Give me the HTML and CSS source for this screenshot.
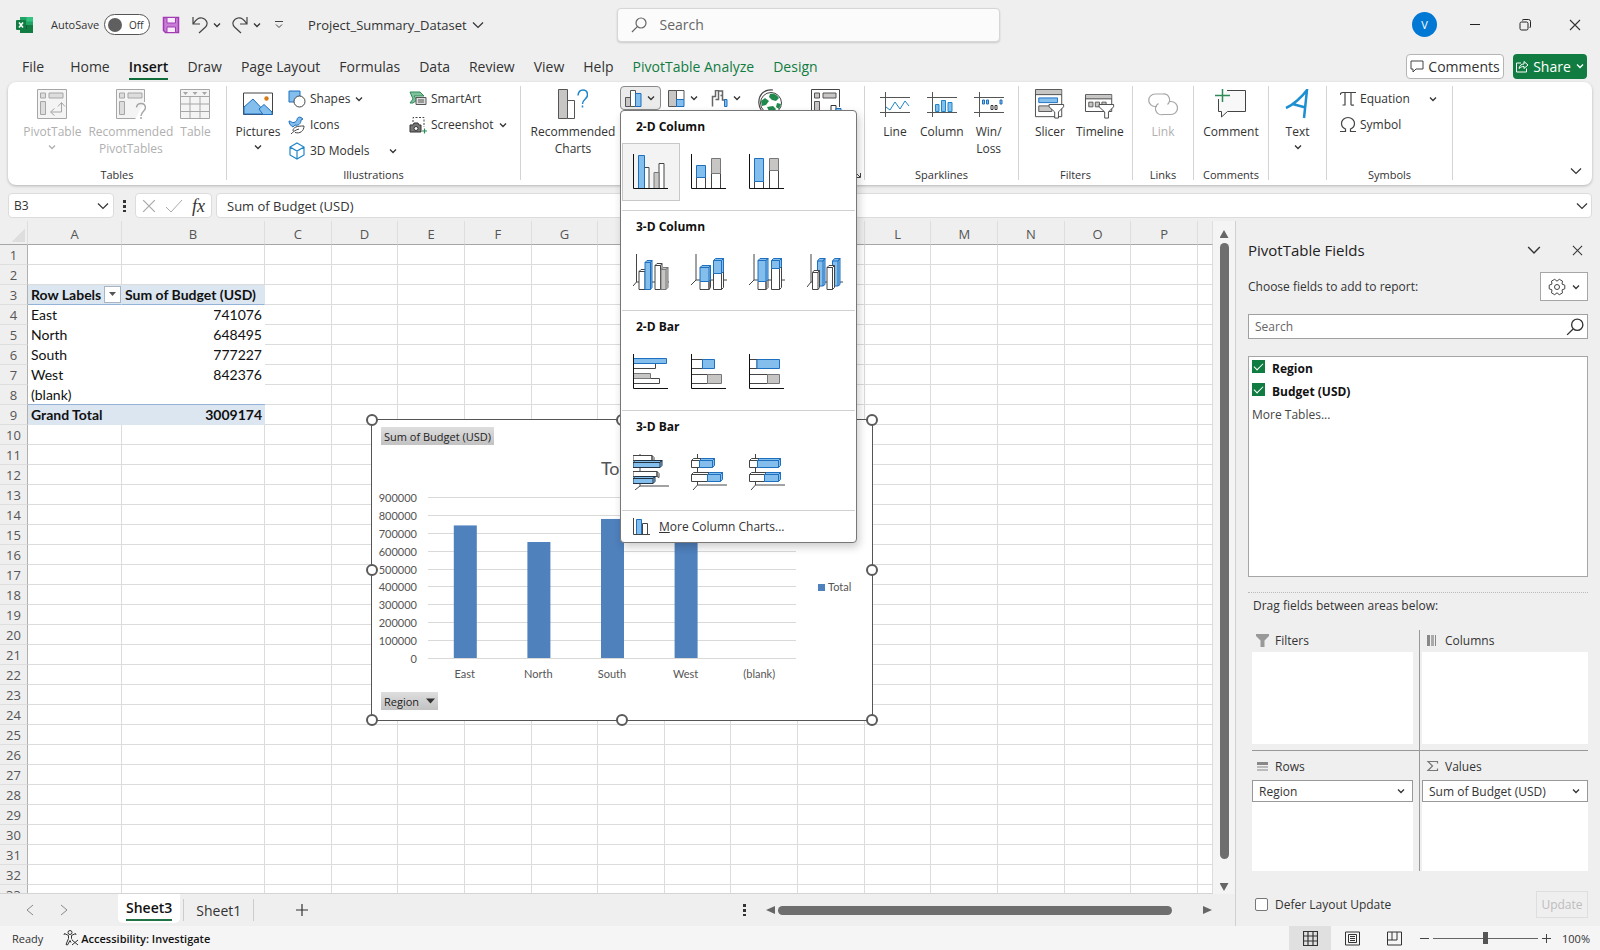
FILE: index.html
```html
<!DOCTYPE html>
<html lang="en">
<head>
    <meta charset="UTF-8">
    <meta name="viewport" content="width=device-width, initial-scale=1.0">
    <title>Project_Summary_Dataset - Excel</title>
    <link rel="stylesheet" href="styles.css">
</head>
<body>
    <!-- Shared icons -->
    <svg class="sprite" aria-hidden="true">
        <symbol id="chev" viewBox="0 0 10 10"><path d="M2 3.5l3 3 3-3" fill="none" stroke="currentColor" stroke-width="1.3"/></symbol>
        <symbol id="chev-lg" viewBox="0 0 12 12"><path d="M1 3.5l5 5 5-5" fill="none" stroke="currentColor" stroke-width="1.2"/></symbol>
        <symbol id="cross" viewBox="0 0 12 12"><path d="M1 1l10 10M11 1L1 11" fill="none" stroke="currentColor" stroke-width="1.1"/></symbol>
        <symbol id="lens" viewBox="0 0 16 16"><circle cx="10" cy="6" r="5" fill="none" stroke="currentColor" stroke-width="1.2"/><path d="M6.3 9.7L1 15" stroke="currentColor" stroke-width="1.2"/></symbol>
    </svg>

    <header class="titlebar">
        <div class="title-left">
            <svg class="logo" viewBox="0 0 18 18"><path d="M4 1h13v16H4z" fill="#21a366"/><path d="M10.5 1H17v4.500h-6.500z" fill="#33c481"/><path d="M4 9h13v8H4z" fill="#107c41"/><path d="M4 9h7v4H4z" fill="#185c37"/><rect y="4" width="10" height="10" rx="1" fill="#107c41"/><path d="M3 6.5l4 5M7 6.5l-4 5" stroke="#fff" stroke-width="1.5"/></svg>
            <label class="autosave">AutoSave <input type="checkbox"><span class="toggle">Off</span></label>
            <button class="plain save" aria-label="Save"><svg width="18" height="18" viewBox="0 0 18 18"><path d="M1.5 1.5h15v15h-13l-2-2z" fill="#c77dd6" stroke="#a33ab5" stroke-width="1.5"/><path d="M5 1.5h8.500v5.500H5z" fill="#f7eaf9" stroke="#a33ab5"/><path d="M5 11h8.500v5.500H5z" fill="#f7eaf9" stroke="#a33ab5"/></svg></button>
            <button class="plain" aria-label="Undo"><svg width="16" height="18" viewBox="0 0 16 18"><path d="M1 1v7h7M1.5 7.5C4 3.5 7 1.5 10 2c5 1 6.500 6 3.500 9L7 17" fill="none" stroke="#444" stroke-width="1.2"/></svg></button>
            <svg class="chev"><use href="#chev"/></svg>
            <button class="plain redo" aria-label="Redo"><svg width="16" height="18" viewBox="0 0 16 18"><path d="M15 1v7H8M14.5 7.5C12 3.5 9 1.5 6 2 1 3-.5 8 2.5 11L9 17" fill="none" stroke="#444" stroke-width="1.2"/></svg></button>
            <svg class="chev"><use href="#chev"/></svg>
            <button class="plain qat" aria-label="Customize toolbar"><svg width="10" height="10" viewBox="0 0 10 10"><path d="M1 1.5h8M2 4.5l3 3 3-3" fill="none" stroke="#444"/></svg></button>
            <button class="plain docname">Project_Summary_Dataset <svg class="chev-lg"><use href="#chev-lg"/></svg></button>
        </div>
        <div class="topsearch">
            <svg class="lens"><use href="#lens"/></svg>
            <input type="text" placeholder="Search" aria-label="Search">
        </div>
        <div class="title-right">
            <button class="avatar">V</button>
            <button class="plain win" aria-label="Minimize"><svg width="10" height="12" viewBox="0 0 10 12"><path d="M0 5.5h10" stroke="#222"/></svg></button>
            <button class="plain win" aria-label="Restore"><svg width="12" height="12" viewBox="0 0 12 12" fill="none" stroke="#222"><rect x="1" y="3" width="8" height="8" rx="1.5"/><path d="M3 1.5C3.5 1 4 .5 5 .5h4.500q2 0 2 2V7q0 1.500-1 2"/></svg></button>
            <button class="plain win" aria-label="Close"><svg width="12" height="12"><use href="#cross"/></svg></button>
        </div>
    </header>

    <nav class="tabs">
        <a href="#" class="file">File</a>
        <a href="#">Home</a>
        <a href="#" class="active">Insert</a>
        <a href="#">Draw</a>
        <a href="#">Page Layout</a>
        <a href="#">Formulas</a>
        <a href="#">Data</a>
        <a href="#">Review</a>
        <a href="#">View</a>
        <a href="#">Help</a>
        <a href="#" class="context">PivotTable Analyze</a>
        <a href="#" class="context">Design</a>
        <button class="comments"><svg width="14" height="14" viewBox="0 0 14 14"><path d="M1 2h12v8H6l-3 3v-3H1z" fill="none" stroke="#444"/></svg>Comments</button>
        <button class="share"><svg width="14" height="14" viewBox="0 0 14 14"><path d="M6 4H1.500v9h10V9.500M4 9.500C4.500 6.500 6.500 5 9 5V2.500L13 6 9 9.500V7.500C7 7.500 5.500 8 4 9.500z" fill="none" stroke="#fff"/></svg>Share<svg class="chev"><use href="#chev"/></svg></button>
    </nav>

    <section class="ribbon">
        <div class="group g-tables">
            <div class="group-body">
                <button class="big" disabled><svg width="30" height="30" viewBox="0 0 30 30" fill="#ddd" stroke="#a6a6a6"><path d="M.5.5h29v29H.5z" fill="#f4f4f4"/><path d="M3.5 4h5v5h-5zM12 4h14v5H12zM3.5 12.5h5v13h-5z"/><path d="M24.5 14v9H14M21 17.5l3.500-4 3.500 4M17.5 19.5l-4 3.500 4 3.500" fill="none"/></svg><span>PivotTable</span><svg class="chev"><use href="#chev"/></svg></button>
                <button class="big" disabled><svg width="30" height="30" viewBox="0 0 30 30" fill="#ddd" stroke="#a6a6a6"><path d="M19.5 29.5H.5V.5h28V13" fill="#f4f4f4"/><path d="M3.5 4h5v5h-5zM12 4h14v5H12zM3.5 12.5h5v13h-5z"/><path d="M20.5 18.5q.5-4 4.500-4t4.500 4c0 3.500-4.500 4-4.500 8.500m0 1v2" fill="none" stroke-width="1.5"/></svg><span>Recommended<br>PivotTables</span></button>
                <button class="big" disabled><svg width="30" height="30" viewBox="0 0 30 30" fill="none" stroke="#a6a6a6"><path d="M.5.5h29v29H.5z" fill="#f4f4f4"/><path d="M.5 7.5h29M.5 15h29M.5 22.5h29M10 7.5v22M20 7.5v22"/><path d="M3 3h5L5.500 6zM12.5 3h5L15 6zM22 3h5l-2.500 3z" fill="#a6a6a6" stroke="none"/></svg><span>Table</span></button>
            </div>
            <div class="group-name">Tables</div>
        </div>
        <div class="group g-illus">
            <div class="group-body">
                <button class="big"><svg width="30" height="30" viewBox="0 0 30 30"><path d="M.5 4h29v21.500H.5z" fill="#fff" stroke="#444"/><path d="M1 18l9-8 14 15H1z" fill="#83beec" stroke="#1e6fbe"/><path d="M16 20l5-4.500 8 7.500v2.500h-9z" fill="#83beec" stroke="#1e6fbe"/><circle cx="23.5" cy="9.5" r="2.2" fill="#d87a16"/></svg><span>Pictures</span><svg class="chev"><use href="#chev"/></svg></button>
                <div class="stack">
                    <button class="small"><svg width="18" height="18" viewBox="0 0 18 18"><path d="M1 1h11v11H1z" fill="#83beec" stroke="#1e6fbe"/><circle cx="11.5" cy="11.5" r="5.5" fill="#fff" stroke="#444"/></svg>Shapes<svg class="chev"><use href="#chev"/></svg></button>
                    <button class="small"><svg width="18" height="18" viewBox="0 0 18 18"><path d="M9 4C9 1.500 11 .5 13 1.500L15 3l-2 1c0 4-3 6-6 5L5 11C3 10 1 8 1 5c2 0 3 2 5 1.500S8 5 9 4z" fill="#83beec" stroke="#1e6fbe"/><path d="M5 15c0-4 4-5 11-5 0 5-4 8-9 6.500M3 18c2-2 4-4 8-5" fill="#fff" stroke="#444"/></svg>Icons</button>
                    <button class="small"><svg width="18" height="18" viewBox="0 0 18 18" fill="none" stroke="#1e86c8" stroke-width="1.2"><path d="M9 1l7 4v8l-7 4-7-4V5zM2 5l7 4 7-4M9 9v8"/></svg>3D Models<svg class="chev far"><use href="#chev"/></svg></button>
                </div>
                <div class="stack">
                    <button class="small"><svg width="18" height="18" viewBox="0 0 18 18"><path d="M1 2h10l4 4H5l3 4-4 3H1l3-4z" fill="#7fc29b" stroke="#2e8a57"/><path d="M7 7.5h10v7H7z" fill="#ddd" stroke="#555"/><path d="M9 10h6M9 12h6" stroke="#555"/></svg>SmartArt</button>
                    <button class="small"><svg width="18" height="18" viewBox="0 0 18 18"><path d="M4 6V1.500h11V11" fill="none" stroke="#444" stroke-dasharray="2 1.5"/><path d="M1 9h3l1-2h4l1 2h2v7H1z" fill="#777" stroke="#333"/><circle cx="7" cy="12.5" r="2" fill="#fff" stroke="#333"/><path d="M15.5 12.5v5M13 15h5" stroke="#2e8a57" stroke-width="1.2"/></svg>Screenshot<svg class="chev"><use href="#chev"/></svg></button>
                </div>
            </div>
            <div class="group-name">Illustrations</div>
        </div>
        <div class="group g-charts">
            <div class="group-body">
                <button class="big"><svg width="30" height="30" viewBox="0 0 30 30"><path d="M.5.5h9v29h-9z" fill="#c8c6c4" stroke="#555"/><path d="M9.5 11.5h7v18h-7z" fill="#fff" stroke="#555"/><path d="M20 6.5Q20.5 1 25 1t4.500 5c0 4-5 4-5 9m0 1.500v2" fill="none" stroke="#1e86c8" stroke-width="1.5"/></svg><span>Recommended<br>Charts</span></button>
                <button class="mini pressed" aria-label="Column chart"><svg width="17" height="17" viewBox="0 0 17 17"><path d="M.5 7.5h5v9h-5z" fill="#c8c6c4" stroke="#555"/><path d="M5.5.5h5v16h-5z" fill="#fff" stroke="#555"/><path d="M10.5 3.5h5.500v13h-5.500z" fill="#83beec" stroke="#1e6fbe"/></svg><svg class="chev"><use href="#chev"/></svg></button>
                <button class="mini" aria-label="Hierarchy chart"><svg width="17" height="17" viewBox="0 0 17 17"><path d="M.5.5h8v16h-8z" fill="#c8c6c4" stroke="#555"/><path d="M8.5.5h7.500v9H8.500z" fill="#fff" stroke="#555"/><path d="M8.5 9.5h7.500v7H8.500z" fill="#83beec" stroke="#1e6fbe"/></svg><svg class="chev"><use href="#chev"/></svg></button>
                <button class="mini" aria-label="Waterfall chart"><svg width="17" height="17" viewBox="0 0 17 17"><path d="M1.5 16.5V6.500h3V.5h3v9h-3M7.5 1h4v9h3M11.5 9.5v-4H9.500" fill="none" stroke="#666" stroke-width="1.5"/><path d="M13.5 9.5h2.500v7h-2.500z" fill="#83beec" stroke="#1e6fbe"/></svg><svg class="chev"><use href="#chev"/></svg></button>
                <button class="mini tall" aria-label="Maps"><svg width="26" height="30" viewBox="0 0 26 30"><path d="M16 1C6 0 1 7 2 15s8 12 13 12" fill="none" stroke="#444" stroke-width="1.2"/><circle cx="14" cy="14" r="10.5" fill="#fff" stroke="#444"/><path d="M13 5c3-1 7 0 9 4l-3 3-4-1-3-3zM4 12l4-3 4 3-3 4-4 1zM10 18l6-1 3 3-3 4h-3zM20 14l4 1-2 5-3-2z" fill="#1f8a4c"/></svg></button>
                <button class="mini tall pc" aria-label="PivotChart"><svg width="32" height="30" viewBox="0 0 32 30"><path d="M.5 29V.5h28V18" fill="#fff" stroke="#444"/><path d="M3.5 4h5v5h-5zM12 4h13v5H12zM3.5 12.5h5v13h-5z" fill="#c8c6c4" stroke="#555"/><path d="M20 16.5h5V29h-5z" fill="#fff" stroke="#333"/><path d="M25 19.5h5V29h-5z" fill="#83beec" stroke="#1e6fbe"/></svg></button>
            </div>
            <div class="group-name launcher"><svg width="8" height="8" viewBox="0 0 8 8" fill="none" stroke="#444"><path d="M0 .5h3M.5 0v3M2 2l5 5M7.5 3v4.500H3"/></svg></div>
        </div>
        <div class="group g-spark">
            <div class="group-body">
                <button class="big"><svg width="30" height="30" viewBox="0 0 30 30" fill="none" stroke="#555"><path d="M0 8.5h30M0 23.5h30M5.5 3v25"/><path d="M6 18l4 3 5-8 5 7 5-8 4 5" stroke="#1e86c8"/></svg><span>Line</span></button>
                <button class="big"><svg width="30" height="30" viewBox="0 0 30 30" fill="none" stroke="#555"><path d="M0 8.5h30M0 23.5h30M5.5 3v25"/><path d="M8.5 15.5h3.500v7H8.500zM14.5 11.5h4v11h-4zM21 13.5h4v9h-4z" fill="#83beec" stroke="#1e86c8"/></svg><span>Column</span></button>
                <button class="big"><svg width="30" height="30" viewBox="0 0 30 30" fill="none" stroke="#555"><path d="M0 8.5h30M0 23.5h30M5.5 3v25"/><path d="M8.5 11h2v4h-2zM12.5 11h2v4h-2zM26 11h2v4h-2z" fill="#83beec" stroke="#1e6fbe"/><path d="M17 16.5h2v4h-2zM21 16.5h2v4h-2z" fill="#fff" stroke="#333"/></svg><span>Win/<br>Loss</span></button>
            </div>
            <div class="group-name">Sparklines</div>
        </div>
        <div class="group g-filters">
            <div class="group-body">
                <button class="big"><svg width="32" height="32" viewBox="0 0 32 32"><path d="M.5.5h28v29H.5z" fill="#fff" stroke="#444"/><path d="M1 1h27v5H1z" fill="#c8c6c4"/><path d="M.5 6h28" stroke="#444"/><path d="M4 9.5h20v5H4z" fill="#83beec" stroke="#1e6fbe"/><path d="M4 18h14v6H4z" fill="#c8c6c4" stroke="#555"/><path d="M15 16.5h15.500v2.500L25 24.500V31h-4v-6.500L15 19z" fill="#fff" stroke="#444"/></svg><span>Slicer</span></button>
                <button class="big"><svg width="32" height="32" viewBox="0 0 32 32"><path d="M.5 6h28v18H.5z" fill="#fff" stroke="#444"/><path d="M1 6.5h27v4H1z" fill="#c8c6c4"/><path d="M.5 10.5h28" stroke="#444"/><path d="M4 14h4.500v5H4zM11 14h4.500v5H11zM18 14h4.500v5H18z" fill="#c8c6c4" stroke="#555"/><path d="M15 16.5h15.500v2.500L25 24.500V31h-4v-6.500L15 19z" fill="#fff" stroke="#444"/></svg><span>Timeline</span></button>
            </div>
            <div class="group-name">Filters</div>
        </div>
        <div class="group g-links">
            <div class="group-body">
                <button class="big" disabled><svg width="30" height="30" viewBox="0 0 30 30" fill="none" stroke="#a6a6a6" stroke-width="1.2"><path d="M9 17.5H7a6 6 0 0 1 0-12.500h8a6 6 0 0 1 4.500 10.500"/><path d="M21 12.5h2a6 6 0 0 1 0 13h-8a6 6 0 0 1-4.500-11"/></svg><span>Link</span></button>
            </div>
            <div class="group-name">Links</div>
        </div>
        <div class="group g-comments">
            <div class="group-body">
                <button class="big"><svg width="32" height="30" viewBox="0 0 32 30"><path d="M3.5 10v12.500h3V28l6-5.500h18v-21H12" fill="#f8f8f8" stroke="#444"/><path d="M7.5-1v14M0 6.5h15" stroke="#2e8a57" stroke-width="1.5"/></svg><span>Comment</span></button>
            </div>
            <div class="group-name">Comments</div>
        </div>
        <div class="group g-text">
            <div class="group-body">
                <button class="big"><svg width="26" height="30" viewBox="0 0 26 30"><path d="M1 19C8 16 17 8 22 1l-3 28M7.5 15l13 3.500" fill="none" stroke="#1e8fd0" stroke-width="2.5"/></svg><span>Text</span><svg class="chev"><use href="#chev"/></svg></button>
            </div>
        </div>
        <div class="group g-symbols">
            <div class="group-body">
                <div class="stack">
                    <button class="small"><svg width="16" height="18" viewBox="0 0 16 18" fill="none" stroke="#444" stroke-width="1.2"><path d="M0 5Q.5 2.5 3 2.5h13M5 2.5V15H2.500M11 2.5v12q0 1 3 .5"/></svg>Equation<svg class="chev far"><use href="#chev"/></svg></button>
                    <button class="small"><svg width="16" height="18" viewBox="0 0 16 18" fill="none" stroke="#444" stroke-width="1.2"><path d="M0 15.5h5.500V13C3 12 1.500 10 1.500 7.500a6.500 6 0 0 1 13 0C14.500 10 13 12 10.500 13v2.500H16"/></svg>Symbol</button>
                </div>
            </div>
            <div class="group-name">Symbols</div>
        </div>
        <button class="plain collapse" aria-label="Collapse ribbon"><svg class="chev-lg"><use href="#chev-lg"/></svg></button>
    </section>

    <div class="formulabar">
        <div class="namebox"><input type="text" value="B3" aria-label="Name box"><svg class="chev-lg"><use href="#chev-lg"/></svg></div>
        <span class="dots"></span>
        <div class="fxbox">
            <svg width="14" height="14" class="faint"><use href="#cross"/></svg>
            <svg width="18" height="14" viewBox="0 0 18 14" class="faint"><path d="M1 8l5 5L17 1" fill="none" stroke="currentColor"/></svg>
            <button class="plain fx">fx</button>
        </div>
        <div class="formula"><input type="text" value="Sum of Budget (USD)" aria-label="Formula"><svg class="chev-lg"><use href="#chev-lg"/></svg></div>
    </div>

    <main class="work">
        <section class="sheet">
            <div class="sheet-view">
                <div class="grid-clip">
                    <table class="grid">
                        <colgroup><col class="c-num"><col class="c-a"><col class="c-b"><col span="14"><col class="c-last"></colgroup>
                        <thead><tr id="letters"></tr></thead>
                        <tbody id="rows"></tbody>
                    </table>

                    <div class="chart">
                        <svg viewBox="0 0 501 301" width="501" height="301">
                            <g id="plot"></g>
                            <text x="249" y="56" class="chart-title">Total</text>
                            <rect x="447" y="165" width="7" height="7" fill="#4f81bd"/>
                            <text x="457" y="172">Total</text>
                        </svg>
                        <button class="field value-field">Sum of Budget (USD)</button>
                        <button class="field axis-field">Region <svg width="9" height="6" viewBox="0 0 9 6"><path d="M0 .5h9L4.500 5.500z" fill="#333"/></svg></button>
                        <i class="handle n w"></i><i class="handle n c"></i><i class="handle n e"></i>
                        <i class="handle m w"></i><i class="handle m e"></i>
                        <i class="handle s w"></i><i class="handle s c"></i><i class="handle s e"></i>
                    </div>
                </div>
                <div class="vscroll"><i class="arrow up"></i><i class="thumb"></i><i class="arrow down"></i></div>
            </div>
            <div class="sheetbar">
                <button class="plain nav" aria-label="Previous sheet"><svg width="8" height="12" viewBox="0 0 8 12"><path d="M7 1L1 6l6 5" fill="none" stroke="currentColor"/></svg></button>
                <button class="plain nav" aria-label="Next sheet"><svg width="8" height="12" viewBox="0 0 8 12"><path d="M1 1l6 5-6 5" fill="none" stroke="currentColor"/></svg></button>
                <button class="tab current"><span>Sheet3</span></button>
                <button class="tab">Sheet1</button>
                <button class="plain add" aria-label="New sheet"><svg width="12" height="12" viewBox="0 0 12 12"><path d="M6 0v12M0 6h12" stroke="#333" stroke-width="1.2"/></svg></button>
                <span class="dots"></span>
                <div class="hscroll"><i class="arrow left"></i><i class="thumb"></i><i class="arrow right"></i></div>
            </div>
        </section>

        <aside class="pane">
            <div class="pane-head">
                <h2>PivotTable Fields</h2>
                <button class="plain" aria-label="Pane options"><svg width="14" height="14"><use href="#chev-lg"/></svg></button>
                <button class="plain" aria-label="Close pane"><svg width="11" height="11"><use href="#cross"/></svg></button>
            </div>
            <div class="pane-tools">
                <span>Choose fields to add to report:</span>
                <button class="gear" aria-label="Tools"><svg width="18" height="18" viewBox="0 0 18 18" fill="none" stroke="#444" stroke-linejoin="round"><path d="M16.8 7.2v3.6L14 11.9l.5 3-3.2 1.8L9 14.8l-2.3 1.9-3.2-1.8.5-3-2.8-1.1V7.2L4 6.1l-.5-3 3.2-1.8L9 3.200l2.3-1.9 3.2 1.8-.5 3z"/><circle cx="9" cy="9" r="2.5"/></svg><svg class="chev"><use href="#chev"/></svg></button>
            </div>
            <div class="field-search"><input type="text" placeholder="Search" aria-label="Search fields"><svg width="18" height="18"><use href="#lens"/></svg></div>
            <div class="field-list">
                <label class="check"><input type="checkbox" checked>Region</label>
                <label class="check"><input type="checkbox" checked>Budget (USD)</label>
                <a href="#">More Tables...</a>
            </div>
            <p class="drag">Drag fields between areas below:</p>
            <div class="areas">
                <div class="area">
                    <h3><svg width="13" height="13" viewBox="0 0 13 13"><path d="M0 0h13v2L8.500 6.500V13h-4V6.500L0 2z" fill="#999"/></svg>Filters</h3>
                    <div class="box"></div>
                </div>
                <div class="area">
                    <h3><svg width="13" height="13" viewBox="0 0 13 13"><path d="M1 1h3v11H1z" fill="#888"/><path d="M5 1h3v11H5z" fill="#aaa"/><path d="M9 1h1v11H9z" fill="#888"/></svg>Columns</h3>
                    <div class="box"></div>
                </div>
                <div class="area">
                    <h3><svg width="13" height="13" viewBox="0 0 13 13"><path d="M1 2h11v3H1z" fill="#888"/><path d="M1 6h11v2H1zM1 9h11v2H1z" fill="#bbb"/></svg>Rows</h3>
                    <div class="box"><div class="pick"><select aria-label="Rows field"><option>Region</option></select><svg class="chev"><use href="#chev"/></svg></div></div>
                </div>
                <div class="area">
                    <h3><svg width="13" height="13" viewBox="0 0 13 13"><path d="M11.5 3.5V1.500H2l4.500 4.500L2 10.500h9.500v-2" fill="none" stroke="#777" stroke-width="1.2"/></svg>Values</h3>
                    <div class="box"><div class="pick"><select aria-label="Values field"><option>Sum of Budget (USD)</option></select><svg class="chev"><use href="#chev"/></svg></div></div>
                </div>
            </div>
            <div class="pane-foot">
                <label class="defer"><input type="checkbox">Defer Layout Update</label>
                <button class="update" disabled>Update</button>
            </div>
        </aside>
    </main>

    <footer class="status">
        <span class="ready">Ready</span>
        <button class="plain access"><svg width="16" height="16" viewBox="0 0 16 16" fill="none" stroke="#333"><circle cx="7" cy="2.5" r="2"/><path d="M1.5 3.5l4 2v3l-2.500 6 1.500.5L7 10.500l1 2M12.5 3.5l-4 2v3l.5 1M1.5 3.5L1 5M12.5 3.5L13 5M9 10l6 5M15 10l-6 5"/></svg>Accessibility: Investigate</button>
        <div class="views">
            <button class="plain view on" aria-label="Normal"><svg width="15" height="15" viewBox="0 0 15 15" fill="none" stroke="#333"><path d="M.5.5h14v14H.5zM5 0v15M10 0v15M0 5h15M0 10h15" stroke-width="1.2"/></svg></button>
            <button class="plain view" aria-label="Page layout"><svg width="15" height="15" viewBox="0 0 15 15" fill="none" stroke="#333"><path d="M.5 1h14v13H.5zM3.5 3.5h8v8h-8zM5 5.5h5M5 7.5h5M5 9.5h5"/></svg></button>
            <button class="plain view" aria-label="Page break preview"><svg width="15" height="15" viewBox="0 0 15 15" fill="none" stroke="#333"><path d="M.5 1h14v13H.5zM5 1v8h5V1M.5 9H5"/></svg></button>
            <button class="plain zoom-btn" aria-label="Zoom out"><svg width="9" height="9" viewBox="0 0 9 9"><path d="M0 4.5h9" stroke="#444"/></svg></button>
            <input type="range" min="10" max="190" value="100" aria-label="Zoom">
            <button class="plain zoom-btn" aria-label="Zoom in"><svg width="9" height="9" viewBox="0 0 9 9"><path d="M0 4.5h9M4.5 0v9" stroke="#444"/></svg></button>
            <span class="percent">100%</span>
        </div>
    </footer>

    <!-- Column chart menu -->
    <div class="menu">
        <h4>2-D Column</h4>
        <div class="choices">
            <button class="selected" aria-label="Clustered column"><svg viewBox="0 0 36 36"><path d="M11.5 13.5H16v21h-4.500zM26 9.5h5v25h-5z" class="w"/><path d="M21 18.5h5v16h-5z" class="g"/><path d="M5.5 1.5h6v33h-6z" class="b"/><path d="M.5 0v34.500H35" class="l"/></svg></button>
            <button aria-label="Stacked column"><svg viewBox="0 0 36 36"><path d="M5.5 23.5h9v11h-9zM20.5 19.5h9v15h-9z" class="w"/><path d="M20.5 4.5h9v15h-9z" class="g"/><path d="M5.5 11.5h9v12h-9z" class="b"/><path d="M.5 0v34.500H35" class="l"/></svg></button>
            <button aria-label="100% stacked column"><svg viewBox="0 0 36 36"><path d="M5.5 27.5h9v7h-9zM20.5 16.5h9v18h-9z" class="w"/><path d="M20.5 4.5h9v12h-9z" class="g"/><path d="M5.5 4.5h9v23h-9z" class="b"/><path d="M.5 0v34.500H35" class="l"/></svg></button>
        </div>
        <h4>3-D Column</h4>
        <div class="choices">
            <button aria-label="3-D clustered column"><svg viewBox="0 0 36 36"><path d="M3.5 0v28L0 32M3.5 28H36" class="t"/><path d="M6 17.5h6v18H6zM6 17.5l2-2h5l-1 2M22 11.5h5.500v24H22zM22 11.5l2-2h5l-1.500 2M29 9.5V16" class="w"/><path d="M28 15.5h5v20h-5zM28 15.5l2-2h5l-2 2M33 15.5l2-2v20l-2 2" class="g"/><path d="M12 8.5h5.500v27H12zM12 8.5l2-2h5l-1.500 2M17.5 8.5l1.500-2v27l-1.500 2" class="b"/></svg></button>
            <button aria-label="3-D stacked column"><svg viewBox="0 0 36 36"><path d="M5 0v26L0 31M5 26h31" class="t"/><path d="M9 27.5h9v8H9zM18 27.5v8l1.500-2v-8zM22.5 19.5h8v16h-8zM30.5 19.5v16l2-2v-16z" class="w"/><path d="M9 13.5h9v14H9zM9 13.5l2-2h8.500l-1.500 2M18 13.5l1.500-2v14l-1.500 2M22.5 6.5h8v13h-8zM22.5 6.5l2-2h8l-2 2M30.5 6.5l2-2v13l-2 2" class="b"/></svg></button>
            <button aria-label="3-D 100% stacked column"><svg viewBox="0 0 36 36"><path d="M5 0v26L0 31M5 26h31" class="t"/><path d="M9 27.5h8v8H9zM17 27.5v8l2-2v-8zM22.5 14.5h8v21h-8zM30.5 14.5v21l2-2v-21z" class="w"/><path d="M9 6.5h8v21H9zM9 6.5l2-2h8l-2 2M17 6.5l2-2v21l-2 2M22.5 6.5h8v8h-8zM22.5 6.5l2-2h8l-2 2M30.5 6.5l2-2v8l-2 2" class="b"/></svg></button>
            <button aria-label="3-D column"><svg viewBox="0 0 36 36"><path d="M4 0v28L0 33M4 28h32" class="t"/><path d="M10.5 7h5.500v25h-5.500zM10.5 7l2-2.500h5.500l-2 2.500M16 7l2-2.500v26L16 32M25.5 7H31v25h-5.500zM25.5 7l2-2.500H33L31 7M31 7l2-2.500v26L31 32" class="b"/><path d="M5.5 18.5H11v17H5.500zM5.5 18.5l1.500-2h5.500l-1.500 2M11 18.5l1.500-2v17l-1.500 2M20 13.5h5.500v22H20zM20 13.5l2-2h5.500l-2 2M25.5 13.5l2-2v22l-2 2" class="w"/></svg></button>
        </div>
        <h4>2-D Bar</h4>
        <div class="choices">
            <button aria-label="Clustered bar"><svg viewBox="0 0 36 36"><path d="M.5 9.5h22v5h-22zM.5 24.5h26v5h-26z" class="w"/><path d="M.5 19.5h17v5h-17z" class="g"/><path d="M.5 4.5h33v5h-33z" class="b"/><path d="M.5 0v34.500H35" class="l"/></svg></button>
            <button aria-label="Stacked bar"><svg viewBox="0 0 36 36"><path d="M.5 5.5h11v9H.5zM.5 20.5h16v9H.5z" class="w"/><path d="M16.5 20.5h14v9h-14z" class="g"/><path d="M11.5 5.5h12v9h-12z" class="b"/><path d="M.5 0v34.500H35" class="l"/></svg></button>
            <button aria-label="100% stacked bar"><svg viewBox="0 0 36 36"><path d="M.5 5.5H8v9H.5zM.5 20.5h18v9H.5z" class="w"/><path d="M18.5 20.5h12v9h-12z" class="g"/><path d="M8 5.5h22.500v9H8z" class="b"/><path d="M.5 0v34.500H35" class="l"/></svg></button>
        </div>
        <h4>3-D Bar</h4>
        <div class="choices">
            <button aria-label="3-D clustered bar"><svg viewBox="0 0 36 36"><path d="M7 0v32L2 36M7 32h29" class="t"/><path d="M0 1.5h19v5H0zM19 1.5l2 2v5h-2zM0 17.5h24v5H0zM24 17.5l2 2v4l-2-1z" class="w"/><path d="M0 8.5h27v5H0zM0 8.5l2-2h27l-2 2M27 8.5l2-2v5l-2 2M0 24.5h20v5H0zM0 24.5l2-2h20l-2 2M20 24.5l2-2v5l-2 2" class="b dark"/></svg></button>
            <button aria-label="3-D stacked bar"><svg viewBox="0 0 36 36"><path d="M6.5 0v31L2 36M6.5 31H36" class="t"/><path d="M.5 6.5h8v7h-8zM.5 6.5l2-2h8l-2 2M.5 20.5h16v7H.5zM.5 20.5l2-2h16l-2 2" class="w"/><path d="M8.5 6.5h13v7h-13zM8.5 6.5l2-2h13l-2 2M21.5 6.5l2-2v7l-2 2M16.5 20.5h13v7h-13zM16.5 20.5l2-2h13l-2 2M29.5 20.5l2-2v7l-2 2" class="b"/></svg></button>
            <button aria-label="3-D 100% stacked bar"><svg viewBox="0 0 36 36"><path d="M6.5 0v31L2 36M6.5 31H36" class="t"/><path d="M.5 6.5h8v7h-8zM.5 6.5l2-2h8l-2 2M.5 20.5h15v7H.5zM.5 20.5l2-2h15l-2 2" class="w"/><path d="M8.5 6.5h21v7h-21zM8.5 6.5l2-2h21l-2 2M29.5 6.5l2-2v7l-2 2M15.5 20.5h14v7h-14zM15.5 20.5l2-2h14l-2 2M29.5 20.5l2-2v7l-2 2" class="b"/></svg></button>
        </div>
        <button class="more"><svg width="17" height="17" viewBox="0 0 17 17"><path d="M9.5 5.5h5v11h-5z" class="w"/><path d="M3.5 1.5h5v15h-5z" class="b"/><path d="M.5 0v16.500H17" class="t"/></svg><span><u>M</u>ore Column Charts...</span></button>
    </div>

    <script>
        const cells = {
            3: ['Row Labels', 'Sum of Budget (USD)'],
            4: ['East', 741076],
            5: ['North', 648495],
            6: ['South', 777227],
            7: ['West', 842376],
            8: ['(blank)', ''],
            9: ['Grand Total', 3009174]
        };

        const letters = 'ABCDEFGHIJKLMNOP';
        document.getElementById('letters').innerHTML = '<th class="corner"></th>' +
            [...letters].map(l => `<th>${l}</th>`).join('') + '<th></th>';

        let html = '';
        for (let r = 1; r <= 33; r++) {
            const row = cells[r] || ['', ''];
            const filter = r === 3 ? '<button class="filter" aria-label="Filter"><svg width="7" height="4" viewBox="0 0 7 4"><path d="M0 0h7L3.500 4z" fill="#555"/></svg></button>' : '';
            const type = r === 3 ? 'pt head' : r === 9 ? 'pt total' : cells[r] ? 'pt' : '';
            html += `<tr class="${type}"><th>${r}</th><td>${row[0]}${filter}</td><td>${row[1]}</td>${'<td></td>'.repeat(15)}</tr>`;
        }
        document.getElementById('rows').innerHTML = html;

        // Chart: value axis runs 0 to 900000, 161px tall
        const base = 239, left = 57, right = 425, scale = 161 / 900000;
        let plot = '';
        for (let v = 0; v <= 900000; v += 100000) {
            const y = Math.round(base - v * scale) + 0.5;
            plot += `<path d="M${left} ${y}H${right}" stroke="#d9d9d9"/><text x="46" y="${y + 4}" text-anchor="end">${v}</text>`;
        }
        for (let i = 0; i < 5; i++) {
            const [name, value] = cells[i + 4];
            const x = left + (right - left) / 5 * (i + 0.5);
            const h = value * scale;
            plot += `<rect x="${x - 11}" y="${base - h}" width="23" height="${h}" fill="#4f81bd"/><text x="${x}" y="259" text-anchor="middle">${name}</text>`;
        }
        document.getElementById('plot').innerHTML = plot;
    </script>
</body>
</html>
```
FILE: styles.css
```css
* {
    box-sizing: border-box;
}

body {
    margin: 0;
    height: 100vh;
    display: flex;
    flex-direction: column;
    background-color: #efefef;
    color: #333;
    font-family: "Open Sans", "Noto Sans", sans-serif;
    font-size: 13px;
    overflow: hidden;
}

button, input, select {
    font: inherit;
    color: inherit;
}

button {
    padding: 0;
    border: none;
    background: none;
}

svg {
    flex: none;
}

.sprite {
    display: none;
}

.plain {
    display: flex;
    align-items: center;
}

.chev {
    width: 10px;
    height: 10px;
}

.chev-lg {
    width: 12px;
    height: 12px;
}

/* Title bar */
.titlebar {
    display: flex;
    align-items: center;
    height: 49px;
    padding-left: 16px;
}

.title-left, .title-right {
    flex: 1;
    display: flex;
    align-items: center;
}

.logo {
    width: 18px;
    height: 18px;
}

.autosave {
    display: flex;
    align-items: center;
    gap: 5px;
    margin-left: 17px;
    font-size: 11px;
}

.autosave input {
    position: absolute;
    opacity: 0;
}

.toggle {
    display: flex;
    align-items: center;
    gap: 7px;
    width: 46px;
    height: 21px;
    padding-left: 3px;
    border: 1px solid #555;
    border-radius: 11px;
    background-color: #fff;
    font-size: 10px;
}

.toggle::before {
    content: "";
    width: 14px;
    height: 14px;
    border-radius: 50%;
    background-color: #5f5f5f;
}

.save {
    margin: 0 12px;
}

.title-left .chev {
    margin-left: 4px;
}

.redo {
    margin-left: 10px;
}

.qat {
    margin-left: 12px;
}

.docname {
    margin-left: 24px;
    gap: 5px;
}

.topsearch {
    display: flex;
    align-items: center;
    width: 383px;
    height: 34px;
    padding-left: 13px;
    border: 1px solid #d6d6d6;
    border-radius: 4px;
    background-color: #fbfbfb;
    box-shadow: 0 1px 2px rgba(0, 0, 0, 0.15);
}

.lens {
    width: 16px;
    height: 16px;
    color: #666;
}

.topsearch input {
    flex: 1;
    min-width: 0;
    margin-left: 11px;
    border: none;
    background: none;
    font-size: 14px;
}

input::placeholder {
    color: #666;
    opacity: 1;
}

.title-right {
    justify-content: flex-end;
}

.avatar {
    width: 25px;
    height: 25px;
    margin-right: 13px;
    border-radius: 50%;
    background-color: #0078d4;
    color: #fff;
    font-size: 11px;
}

.win {
    justify-content: center;
    width: 50px;
    height: 40px;
}

/* Tabs */
.tabs {
    display: flex;
    align-items: center;
    gap: 19px;
    height: 33px;
    padding: 1px 13px 0 22px;
    font-size: 14px;
}

.tabs a {
    padding: 4px 0 2px;
    border-bottom: 2px solid transparent;
    color: #333;
    line-height: 19px;
    text-decoration: none;
}

.tabs .file {
    margin-right: 7px;
}

.tabs .active {
    border-color: #0f6b38;
    color: #111;
    font-weight: 600;
}

.tabs .context {
    color: #107c41;
}

.comments, .share {
    display: flex;
    align-items: center;
    justify-content: center;
    gap: 4px;
    height: 25px;
    border-radius: 4px;
}

.comments {
    width: 98px;
    margin-left: auto;
    border: 1px solid #b5b5b5;
    background-color: #fff;
}

.share {
    width: 74px;
    margin-left: -10px;
    background-color: #107c41;
    color: #fff;
}

/* Ribbon */
.ribbon {
    display: flex;
    flex: none;
    height: 103px;
    margin: 0 8px;
    padding: 4px 0 5px;
    border-radius: 8px;
    background-color: #fff;
    box-shadow: 0 1px 3px rgba(0, 0, 0, 0.25);
}

.group {
    flex: none;
    display: flex;
    flex-direction: column;
    border-right: 1px solid #d4d4d4;
}

.group-body {
    flex: 1;
    display: flex;
    align-items: flex-start;
    min-height: 0;
}

.group-name {
    height: 12px;
    font-size: 11px;
    line-height: 13px;
    text-align: center;
}

.big {
    display: flex;
    flex-direction: column;
    align-items: center;
    padding-top: 3px;
    font-size: 12px;
    line-height: 17px;
    text-align: center;
}

.big > svg:first-child {
    height: 30px;
    margin-bottom: 4px;
}

.big .chev {
    margin-top: 2px;
}

.big:disabled {
    color: #b0b0b0;
}

.stack {
    display: flex;
    flex-direction: column;
}

.small {
    display: flex;
    align-items: center;
    gap: 4px;
    height: 27px;
    margin-top: -1px;
    font-size: 12px;
    white-space: nowrap;
}

.small .far {
    margin-left: 14px;
}

.g-tables {
    width: 219px;
}

.g-tables .group-body {
    justify-content: center;
    gap: 7px;
}

.g-illus {
    width: 294px;
}

.g-illus .group-body {
    padding-left: 9px;
}

.g-illus .big {
    width: 44px;
    margin-right: 8px;
}

.g-illus .stack {
    width: 122px;
}

.g-illus .stack + .stack {
    padding-left: 5px;
}

.g-charts {
    width: 344px;
}

.g-charts .group-body {
    padding-left: 10px;
}

.g-charts .big {
    width: 84px;
    margin-right: 5px;
}

.mini {
    display: flex;
    align-items: center;
    gap: 4px;
    height: 24px;
    padding-left: 5px;
    width: 43px;
}

.pressed {
    width: 41px;
    border: 1px solid #8a8a8a;
    border-radius: 4px;
    background-color: #ebebeb;
    padding-left: 4px;
    margin-right: 2px;
}

.tall {
    height: 36px;
    width: 50px;
    padding-left: 8px;
}

.pc {
    padding-left: 12px;
}

.launcher {
    display: flex;
    justify-content: flex-end;
    align-items: center;
    padding-right: 3px;
}

.g-spark {
    width: 154px;
}

.g-spark .group-body, .g-filters .group-body {
    padding-left: 15px;
    gap: 10px;
}

.g-filters {
    width: 114px;
}

.g-links {
    width: 61px;
}

.g-comments {
    width: 75px;
}

.g-text {
    width: 58px;
}

.g-symbols {
    width: 126px;
}

.g-links .group-body, .g-comments .group-body, .g-text .group-body {
    justify-content: center;
}

.g-symbols .group-body {
    padding-left: 13px;
}

.collapse {
    align-self: flex-end;
    margin: 0 10px 3px auto;
}

/* Formula bar */
.formulabar {
    display: flex;
    flex: none;
    align-items: center;
    height: 36px;
    padding: 5px 8px 0;
}

.namebox, .fxbox, .formula {
    display: flex;
    align-items: center;
    height: 25px;
    border: 1px solid #dcdcdc;
    border-radius: 4px;
    background-color: #fff;
}

.namebox {
    width: 106px;
    padding: 0 4px 0 5px;
}

.formula {
    flex: 1;
    margin-left: 4px;
    padding: 0 3px 0 10px;
}

.formulabar input {
    flex: 1;
    min-width: 0;
    padding: 0;
    border: none;
    background: none;
}

.namebox input {
    font-size: 12px;
}

.dots {
    width: 3px;
    height: 12px;
    background: repeating-linear-gradient(#333 0 3px, transparent 3px 5px);
}

.formulabar .dots {
    margin: 0 9px;
}

.fxbox {
    width: 77px;
    gap: 9px;
    padding-left: 6px;
}

.faint {
    color: #aaa;
}

.fx {
    font-family: "Liberation Serif", serif;
    font-size: 18px;
    font-style: italic;
    line-height: 18px;
}

/* Sheet */
.work {
    flex: 1;
    display: flex;
    min-height: 0;
}

.sheet {
    flex: 1;
    display: flex;
    flex-direction: column;
    min-width: 0;
}

.sheet-view {
    flex: 1;
    display: flex;
    min-height: 0;
}

.grid-clip {
    position: relative;
    flex: 1;
    overflow: hidden;
    border-bottom: 1px solid #d4d4d4;
}

.grid {
    width: 100%;
    border-collapse: separate;
    border-spacing: 0;
    table-layout: fixed;
    color: #111;
    font-family: Lato, "Open Sans", sans-serif;
    font-size: 14px;
}

.c-num {
    width: 28px;
}

.c-a {
    width: 94px;
}

.c-b {
    width: 143px;
}

.c-last {
    width: 15px;
}

.grid th {
    padding: 0;
    background-color: #efefef;
    color: #555;
    font-family: "Open Sans", sans-serif;
    font-size: 13px;
    font-weight: normal;
}

.grid thead th {
    height: 24px;
    padding-top: 2px;
    border-right: 1px solid #dedede;
    border-bottom: 1px solid #a6a6a6;
    line-height: 18px;
}

.grid thead .corner {
    background: linear-gradient(135deg, transparent 50%, #dedede 50%) no-repeat 11px 7px / 14px 14px #efefef;
}

.grid tbody th {
    border-right: 1px solid #b0b0b0;
    border-bottom: 1px solid #dedede;
}

.grid td {
    height: 20px;
    padding: 0 2px 0 3px;
    border-right: 1px solid #dcdcdc;
    border-bottom: 1px solid #dcdcdc;
    background-color: #fff;
    line-height: 18px;
    white-space: nowrap;
}

.pt td:nth-child(2), .pt td:nth-child(3) {
    border-color: #fff;
}

.pt td:nth-child(3) {
    text-align: right;
}

.head td:nth-child(2), .head td:nth-child(3) {
    border-color: #dce6f1;
    border-bottom-color: #95b3d7;
    background-color: #dce6f1;
    font-weight: bold;
}

.head td:nth-child(3) {
    text-align: left;
}

.total td:nth-child(2), .total td:nth-child(3) {
    border-color: #dce6f1;
    background-color: #dce6f1;
    box-shadow: 0 -1px #95b3d7;
    font-weight: bold;
}

.filter {
    float: right;
    display: flex;
    align-items: center;
    justify-content: center;
    width: 17px;
    height: 17px;
    margin-right: -2px;
    border: 1px solid #a9b5c4;
    background-color: #fff;
}

/* Chart object */
.chart {
    position: absolute;
    left: 371px;
    top: 198px;
    width: 502px;
    height: 302px;
    border: 1px solid #555;
    background-color: #fff;
}

.chart > svg {
    display: block;
    margin: -1px 0 0 -1px;
}

.chart text {
    fill: #555;
    font-family: Lato, sans-serif;
    font-size: 11px;
}

.chart .chart-title {
    font-size: 18px;
    text-anchor: middle;
}

.field {
    position: absolute;
    left: 9px;
    display: flex;
    align-items: center;
    gap: 7px;
    height: 18px;
    padding: 0 3px;
    background: linear-gradient(#dedede, #c2c2c2);
    color: #222;
    font-size: 11px;
    white-space: nowrap;
}

.value-field {
    top: 7px;
}

.axis-field {
    bottom: 10px;
}

.handle {
    position: absolute;
    width: 12px;
    height: 12px;
    border: 2px solid #5a5a5a;
    border-radius: 50%;
    background-color: #fff;
}

.handle.n {
    top: -6px;
}

.handle.m {
    top: calc(50% - 6px);
}

.handle.s {
    bottom: -6px;
}

.handle.w {
    left: -6px;
}

.handle.c {
    left: calc(50% - 6px);
}

.handle.e {
    right: -6px;
}

/* Scroll bars */
.vscroll, .hscroll {
    display: flex;
    align-items: center;
}

.vscroll {
    flex-direction: column;
    gap: 5px;
    width: 22px;
    padding: 9px 0 3px;
    background-color: #f4f4f4;
}

.vscroll .thumb {
    flex: 1;
    width: 9px;
    margin-bottom: 19px;
    border-radius: 5px;
    background-color: #6e6e6e;
}

.hscroll {
    flex: 0 1 446px;
    gap: 3px;
}

.hscroll .thumb {
    flex: 1;
    height: 9px;
    margin-right: 28px;
    border-radius: 5px;
    background-color: #6e6e6e;
}

.arrow {
    width: 9px;
    height: 8px;
    background-color: #666;
}

.up {
    clip-path: polygon(50% 0, 100% 100%, 0 100%);
}

.down {
    clip-path: polygon(0 0, 100% 0, 50% 100%);
}

.left {
    clip-path: polygon(0 50%, 100% 0, 100% 100%);
}

.right {
    clip-path: polygon(0 0, 100% 50%, 0 100%);
}

/* Sheet tabs */
.sheetbar {
    display: flex;
    flex: none;
    align-items: center;
    height: 32px;
    padding-left: 26px;
    padding-right: 23px;
}

.nav {
    width: 34px;
    color: #888;
}

.tab {
    height: 22px;
    padding: 0 12px;
    border-right: 1px solid #ccc;
    border-left: 1px solid #ccc;
    font-size: 14px;
}

.current {
    align-self: flex-start;
    height: 29px;
    margin-left: 24px;
    margin-right: 3px;
    padding: 0 8px;
    border: none;
    border-radius: 0 0 5px 5px;
    background-color: #fff;
    color: #111;
    font-weight: 600;
}

.current span {
    display: block;
    border-bottom: 2px solid #217346;
    line-height: 22px;
}

.add {
    margin-left: 42px;
}

.sheetbar .dots {
    margin-left: auto;
    margin-right: 20px;
}

/* PivotTable Fields pane */
.pane {
    display: flex;
    flex-direction: column;
    width: 365px;
    padding: 16px 12px 8px 12px;
    border-left: 1px solid #d0d0d0;
}

.pane-head {
    display: flex;
    align-items: center;
    height: 26px;
    padding-right: 5px;
    gap: 31px;
}

.pane h2 {
    flex: 1;
    margin: 0;
    color: #222;
    font-size: 15px;
    font-weight: 500;
}

.pane-tools {
    display: flex;
    align-items: center;
    justify-content: space-between;
    height: 29px;
    margin: 9px 0 13px;
    font-size: 12px;
}

.gear {
    display: flex;
    align-items: center;
    justify-content: center;
    gap: 5px;
    width: 48px;
    height: 29px;
    border: 1px solid #a6a6a6;
    background-color: #fff;
}

.field-search {
    display: flex;
    align-items: center;
    height: 25px;
    padding: 0 3px 0 6px;
    border: 1px solid #a0a0a0;
    background-color: #fff;
}

.field-search input {
    flex: 1;
    min-width: 0;
    padding: 0;
    border: none;
    font-size: 12px;
}

.field-list {
    height: 221px;
    margin-top: 17px;
    padding: 0 3px;
    border: 1px solid #a6a6a6;
    background-color: #fff;
    font-size: 12px;
}

.field-list a {
    color: #444;
    line-height: 24px;
    text-decoration: none;
}

.check {
    display: flex;
    align-items: center;
    gap: 7px;
    height: 23px;
    color: #111;
    font-weight: bold;
}

.pane input[type="checkbox"] {
    appearance: none;
    width: 13px;
    height: 13px;
    margin: 0;
    border: 1px solid #777;
    border-radius: 2px;
    background-color: #fff;
}

.pane .check input[type="checkbox"] {
    display: flex;
    justify-content: center;
    margin-bottom: 5px;
    border: none;
    border-radius: 0;
    background-color: #107c41;
}

.check input::before {
    content: "";
    width: 8px;
    height: 4px;
    margin-top: 3px;
    border-left: 1px solid #fff;
    border-bottom: 1px solid #fff;
    transform: rotate(-45deg);
}

.drag {
    margin: 15px 0 16px;
    padding: 4px 0 0 5px;
    border-top: 1px dotted #bbb;
    font-size: 12px;
    line-height: 17px;
}

.areas {
    flex: 1;
    display: grid;
    grid-template-columns: 168px 1fr;
    grid-template-rows: 121px 120px;
    margin-left: 4px;
    font-size: 12px;
}

.area {
    display: flex;
    flex-direction: column;
}

.area:nth-child(odd) {
    padding-right: 6px;
    border-right: 1px solid #999;
}

.area:nth-child(even) {
    padding-left: 2px;
}

.area:nth-child(-n+2) {
    padding-bottom: 6px;
    border-bottom: 1px solid #999;
}

.area h3 {
    display: flex;
    align-items: center;
    gap: 6px;
    height: 20px;
    margin: 0 0 2px;
    padding-left: 4px;
    font-size: 12px;
    font-weight: normal;
}

.area:nth-child(n+3) h3 {
    height: 27px;
    padding-top: 3px;
}

.box {
    flex: 1;
    background-color: #fff;
}

.pick {
    display: flex;
    align-items: center;
    height: 22px;
    padding: 0 6px;
    border: 1px solid #999;
}

.pick select {
    flex: 1;
    min-width: 0;
    padding: 0;
    border: none;
    appearance: none;
    background: none;
}

.pane-foot {
    display: flex;
    align-items: center;
    justify-content: space-between;
    padding-left: 7px;
}

.defer {
    display: flex;
    align-items: center;
    gap: 7px;
    font-size: 12px;
}

.update {
    width: 52px;
    height: 27px;
    border: 1px solid #dedede;
    color: #bdbdbd;
    font-size: 12px;
}

/* Status bar */
.status {
    display: flex;
    flex: none;
    align-items: center;
    height: 24px;
    padding: 0 10px 0 12px;
    background-color: #f5f5f5;
    font-size: 11px;
}

.access {
    margin-left: 20px;
    gap: 2px;
    font-size: 11px;
    font-weight: 600;
    color: #111;
}

.views {
    display: flex;
    align-items: center;
    height: 24px;
    margin-left: auto;
}

.view {
    justify-content: center;
    width: 42px;
    height: 24px;
}

.on {
    background-color: #e0e0e0;
}

.zoom-btn {
    margin: 0 4px;
}

.view + .zoom-btn {
    margin-left: 5px;
}

.status input {
    appearance: none;
    width: 105px;
    height: 16px;
    margin: 0;
    background: linear-gradient(#666, #666) no-repeat center / 100% 1px;
}

.status input::-webkit-slider-thumb {
    appearance: none;
    width: 5px;
    height: 12px;
    background-color: #555;
}

.percent {
    margin-left: 7px;
}

/* Drop-down menu over the sheet */
.menu {
    position: absolute;
    left: 620px;
    top: 110px;
    width: 237px;
    padding: 0 1px;
    border: 1px solid #777;
    border-radius: 4px;
    background-color: #fff;
    box-shadow: 2px 4px 8px rgba(0, 0, 0, 0.2);
}

.menu h4 {
    height: 32px;
    margin: 0;
    padding-left: 14px;
    color: #111;
    font-size: 12px;
    line-height: 32px;
}

.choices {
    display: flex;
    height: 68px;
    border-bottom: 1px solid #d0d0d0;
}

.choices button {
    width: 58px;
    height: 58px;
    padding: 10px;
    border: 1px solid transparent;
}

.choices .selected {
    border-color: #c8c8c8;
    background-color: #f3f3f3;
}

.choices svg {
    display: block;
    width: 36px;
    height: 36px;
}

.menu path {
    fill: none;
    stroke: #444;
}

.menu .w {
    fill: #fff;
}

.menu .g {
    fill: #c8c6c4;
    stroke: #777;
}

.menu .b {
    fill: #83beec;
    stroke: #1e6fbe;
}

.menu .dark {
    stroke: #234;
}

.menu .l {
    stroke: #111;
}

.more {
    display: flex;
    align-items: center;
    gap: 9px;
    width: 100%;
    height: 31px;
    padding-left: 11px;
    font-size: 12px;
}
```
